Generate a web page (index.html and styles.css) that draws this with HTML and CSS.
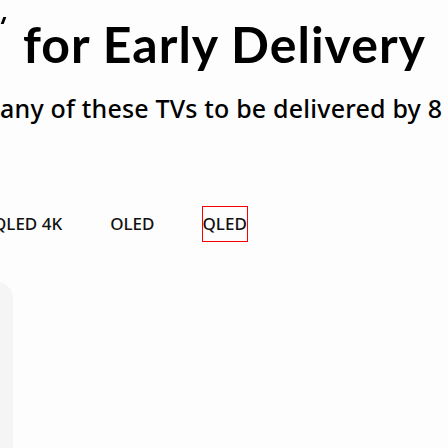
FILE: index.html
```html
<!DOCTYPE html>
<html lang="en">
<head>
<meta charset="utf-8">
<title>Early Delivery</title>
<link rel="stylesheet" href="styles.css">
</head>
<body>
<main class="page">
  <section class="promo">
    <h1 class="title"><span class="tick" aria-hidden="true"></span><span class="words">for Early Delivery</span></h1>
    <p class="subtitle">any of these TVs to be delivered by 8</p>
    <nav class="tabs">
      <a class="tab" href="#">QLED 4K</a>
      <a class="tab" href="#">OLED</a>
      <a class="tab tab--focus" href="#">QLED</a>
    </nav>
    <div class="cards">
      <div class="card"></div>
    </div>
  </section>
</main>
</body>
</html>
```
FILE: styles.css
```css
html, body {
  margin: 0;
  padding: 0;
  background: #fdfdfd;
}
.page {
  width: 448px;
  height: 448px;
  overflow: hidden;
}
.promo {
  display: flex;
  flex-direction: column;
}
.title {
  display: flex;
  align-items: flex-start;
  margin: 12px 0 0 0;
  font-family: Lato, "Liberation Sans", sans-serif;
  font-weight: 700;
  font-size: 50px;
  line-height: 64px;
  letter-spacing: 1px;
  color: #000;
  white-space: nowrap;
}
.tick {
  display: block;
  flex: none;
  width: 3px;
  height: 7px;
  margin: 5px 18px 0 2px;
  background: #000;
  transform: skewX(-20deg);
}
.subtitle {
  margin: 17px 0 0 0;
  font-family: "Noto Sans", "Open Sans", sans-serif;
  font-weight: 500;
  font-size: 25px;
  line-height: 30px;
  letter-spacing: 0.2px;
  color: #000;
  white-space: nowrap;
}
.tabs {
  display: flex;
  gap: 48px;
  margin: 84px 0 0 -7px;
  height: 34px;
  align-items: center;
}
.tab {
  font-family: "Noto Sans", "Open Sans", sans-serif;
  font-weight: 500;
  font-size: 17px;
  line-height: 34px;
  color: #111;
  text-decoration: none;
  white-space: nowrap;
}
.tab--focus {
  outline: 1px solid #ff0000;
}
.cards {
  display: flex;
  margin: 41px 0 0 -200px;
}
.card {
  width: 213px;
  height: 240px;
  background: #f5f5f5;
  border-radius: 16px;
}
```
